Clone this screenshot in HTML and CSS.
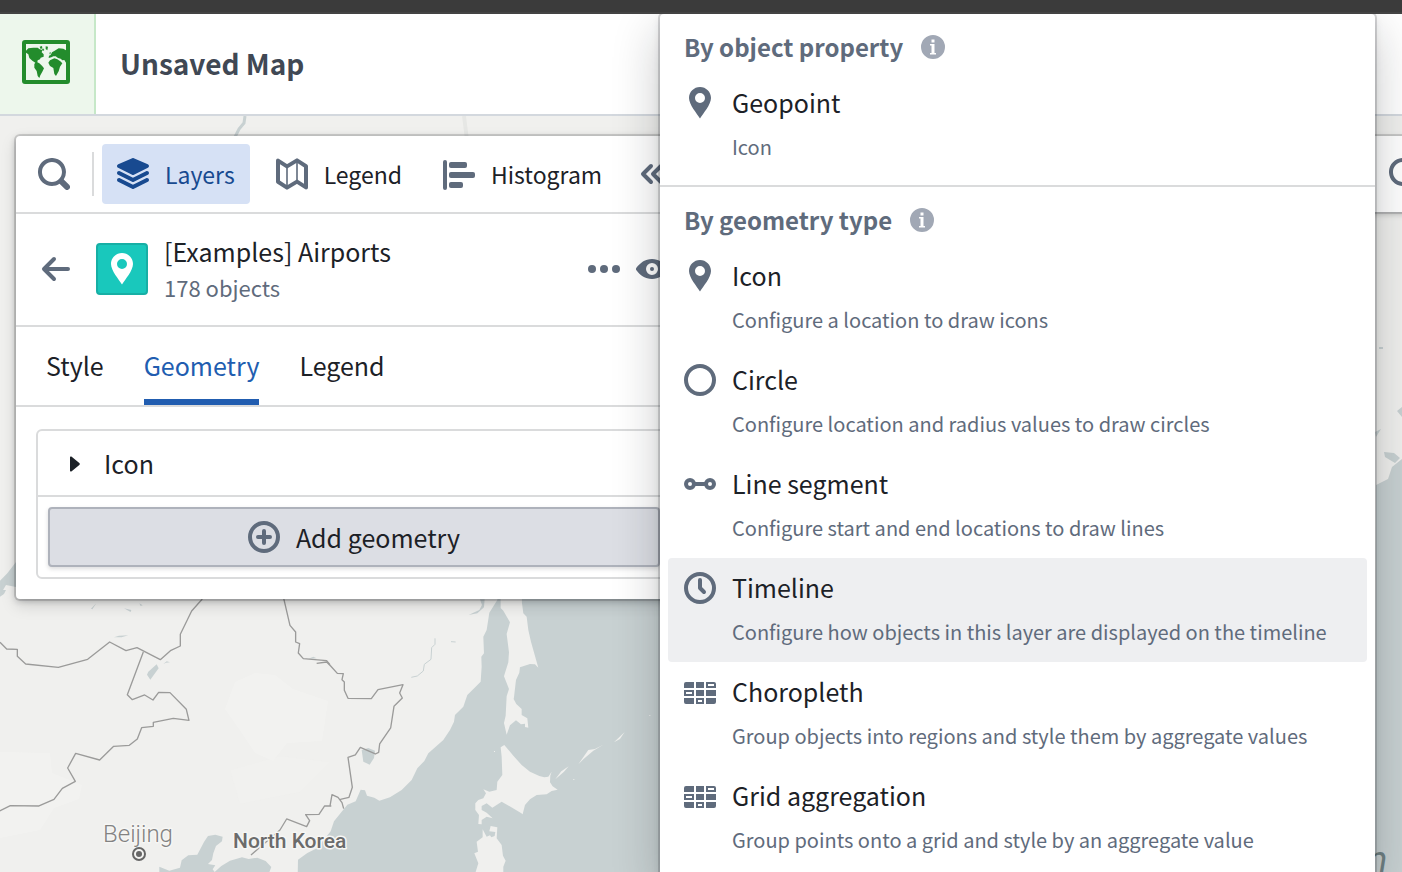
FILE: index.html
```html
<!DOCTYPE html>
<html lang="en">
<head>
<meta charset="utf-8">
<meta name="viewport" content="width=device-width, initial-scale=1">
<title>Unsaved Map</title>
<link rel="stylesheet" href="styles.css">
</head>
<body>
<svg class="sprite" aria-hidden="true">
  <symbol id="pin" viewBox="0 0 16 16"><path fill-rule="evenodd" d="M8 0C4.96 0 2.5 2.46 2.5 5.5c0 3.4 4 7.7 5.5 10.3 1.5-2.6 5.5-6.9 5.5-10.3C13.5 2.46 11.04 0 8 0zm0 8a2.5 2.5 0 110-5 2.5 2.5 0 010 5z"/></symbol>
  <symbol id="search" viewBox="0 0 16 16"><path d="M15.55 13.43l-2.67-2.68a6.94 6.94 0 001.11-3.76c0-3.87-3.13-7-7-7s-7 3.13-7 7 3.13 7 7 7c1.39 0 2.68-.42 3.76-1.11l2.68 2.67a1.498 1.498 0 102.12-2.12zm-8.56-1.44c-2.76 0-5-2.24-5-5s2.24-5 5-5 5 2.24 5 5-2.24 5-5 5z"/></symbol>
  <symbol id="info" viewBox="0 0 16 16"><path fill-rule="evenodd" d="M8 0a8 8 0 100 16A8 8 0 008 0zM7 3h2v2H7V3zm3 10H6v-1h1V7H6V6h3v6h1v1z"/></symbol>
  <symbol id="regions" viewBox="0 -1 32 32"><path fill-rule="evenodd" d="M2 5h8v6H0V7a2 2 0 012-2zM12 5h8v6h-8zM22 5h8a2 2 0 012 2v4H22zM24 7v2h6V7zM0 13h10v6H0zM2 15v2h6v-2zM12 13h8v6h-8zM22 13h10v6H22zM0 21h10v6H2a2 2 0 01-2-2zM12 21h8v6h-8zM14 23v2h4v-2zM22 21h10v4a2 2 0 01-2 2h-8z"/></symbol>
</svg>

<div class="window-bar"></div>
<div class="app">
  <header class="header">
    <a class="logo" href="#" aria-label="Maps home">
      <svg viewBox="66 120 144 132" aria-hidden="true">
        <rect x="72" y="126" width="132" height="120" rx="3" fill="none" stroke="#238c2c" stroke-width="12"/>
        <g fill="#238c2c">
          <path d="M78 152L85 145 100 143 113 143 119 148 127 150 125 157 131 163 131 170 122 173 120 178 113 181 112 187 118 190 126 197 132 205 127 215 121 226 118 234 113 228 110 213 103 203 103 192 106 188 97 182 88 174 85 163 78 158z"/>
          <path d="M119 140L126 138 127 145 122 147zM129 145L133 150 129 153 126 149zM137 139L144 140 142 151 137 147z"/>
          <path d="M150 181L163 175 172 178 181 184 187 190 180 200 176 214 168 228 163 222 160 204 150 198 145 188z"/>
          <path d="M146 174L147 167 152 165 156 157 164 152 176 145 190 146 198 151V188L193 180 187 181 182 176 174 174 167 169 160 169 154 172z"/>
          <path d="M148 158L153 157 150 164z"/>
        </g>
      </svg>
    </a>
    <h1 class="title">Unsaved Map</h1>
  </header>

  <main class="workspace">
    <svg class="map" viewBox="0 116 1402 756" preserveAspectRatio="xMinYMin slice" role="img" aria-label="Map of northeast Asia">
      <rect class="land" y="116" width="1402" height="756"/>
      <g fill="#f4f4f2" opacity=".7">
        <path d="M0 752l50 1 2 20 30 12-3 14-25 9-14 22-40 8zM235 682l20-9 20 2 18 14 35 12-6 40-35 2-14 18-18-8-16-24-14-20z"/>
        <path d="M230 770l50-14 50 6-30 30-60 12z" opacity=".5"/>
      </g>
      <path d="M464 116l3 24" stroke="#e6e7e5" stroke-width="4"/>
      <path class="river" d="M245 116l-1 7-5 6-4 8"/>
      <g transform="translate(330 590) scale(.3333)">
        <path class="water" d="M505 0l-3 30-24 38-8 52-10 20 2 50-8 10 1 30-3 45-40 40-12 35-25 25-3 20-12 25-20 30-45 40-12 23-21 22-17 35-30 30-35 22-32 10-15-9-22-6-6-16-13-2-15 35-25 10-20 25-20 25-10 30-40 50-30 15-28 20-2 100h1140V0z"/>
        <path class="land" d="M575 0l1 40 4 30 10 10 5 40 8 35 22 78-10-10-15-1-30 10-2 16-10 22-6 52-1 5 8 15 16 15v18l17 10 3 28-10-2v-10l-12 2-15-12-18 15-10 28-8-35 5-22 3-58 7-22-15-38 13-42 2-30-7-55 10-35-20-35-8-8V0z"/>
        <path class="land" d="M523 465l27 32 25 28 25 20 28 13 15 4 12-2 10-15-4 12-1 20 8 12 15 10-18 4-15 10-30 2-20 13-15 17-7 28-5-4-58-34-28 18-17-13-15 8v12l15 8 18 17-18-5-15 10v13l-10-1 2-27-11-15v-20l9-10 15-5 8-15-8-12 18 7 22-5 2-25 15-20-2-55-3-28z"/>
        <path class="land" d="M458 718l12 22 10-4 4 6 10-4 2-12-18-2 4-16 20 4-2 33 15 20 4 32 8 15-7 18v16h-83l8-26-12-30 11-5-4-30 18-13z"/>
        <path class="land" d="M676 568l18-24 22-15-14 16zM745 523l30-43 20-3 25-13-30 18-30 26zM852 457l32-31-14 21zM958 375h3v3h-3zM730 567h3v3h-3zM492 483h3v3h-3z"/>
        <path class="water" d="M95 480l20-6 20 8-3 22-13 20-19-9zM450 28h14l-2 24-20 18-26 5 14-7 18-8 8-15z"/>
        <path class="river" stroke-width="5" d="M315 145v18l-10 10-2 35-20 15-3 20-18 15-18 4M363 155l14 1"/>
        <path class="border" d="M-40 220l30-4 12 12 20 22 18 1-4 18 7 7v25l11 24 70 1 20-27 75-15-10 25 8 15-25 25-10 65-33 48-3 25-10 5-45-20-15 23-22 7 13 90-10 30-26 6M0 648l6-34 18 8 12 16 5 18"/>
      </g>
      <g transform="translate(0 590) scale(.3333)">
        <path class="water" d="M0 0h18l-6 12-12 8zM0-28l22-22 26-34v75L18-15 0 16zM445 245l25-22 6 12-25 34-10-15zM342 142l15-5 28-1-20 6zM372 55l22 5-2 6zM273 56l16-16-12 18zM418 40l10 6-6 2zM490 222l10-8 10 3-12 1zM925 206l15-6 10 5zM478 830l30 12 32-9 5-22 20-15 27-2 20-38 12-18 22-4 22 6-2 14-18 14-8 22-4 20-12 12 22 4-8 12 6 8 20-18 26-16 36-10 20 5 26-4 25 10 17 18-6 16H478z"/>
        <path class="border" d="M0 157l20 20 32 1v21l25 23 98 10 88-24 66-52 49 26 33-9 70 36 32-28 28-13v-35l34-70 32-36M430 186l-48 128 15 15 37-14 25 15 17-23 34 1 49 50 8 33-47-6-60 12v12l-35 4-13 34-24 19-47 3-42 41-72-20-24 44 23 40-39 21-25 33-45 20-86-1-32 16M850 20l20 86 17 20v30l12 5-4 28 15 17 70 6 10 12M753 795l87-75 20-33 60 23 9-18-12-18 40-1 17-25h20"/>
      </g>
      <path class="water" d="M1376 488V485l12-6 4-12 10-8v413h-27zM1384 452l10 1 6 5-5 5-10-6zM1375 432l6-3-5 8zM1397 411l5-4v10zM1379 347h4v2h-4z"/>
      <g class="map-labels">
        <text class="city" x="103" y="842">Beijing</text>
        <circle cx="139" cy="854" r="6" fill="#f4f4f2" stroke="#666" stroke-width="2"/>
        <circle cx="139" cy="854" r="3" fill="#666"/>
        <text class="country" x="233" y="848">North Korea</text>
        <text class="ocean" x="1368" y="872">n</text>
      </g>
    </svg>

    <section class="panel" aria-label="Layers">
      <div class="toolbar">
        <button class="icon-button" aria-label="Search"><svg class="icon"><use href="#search"/></svg></button>
        <span class="toolbar-divider"></span>
        <button class="tool tool-active">
          <svg class="icon" viewBox="0 0 16 16" aria-hidden="true"><path d="M.55 4.89l7 3.5c.14.07.29.11.45.11s.31-.04.45-.11l7-3.5a.998.998 0 00-.06-1.81L8.4.08a1.006 1.006 0 00-.79 0l-6.99 3a.992.992 0 00-.07 1.81zM15 10c-.16 0-.31.04-.45.11L8 13.38 1.45 10.1c-.14-.06-.29-.1-.45-.1-.55 0-1 .45-1 1 0 .39.23.73.55.89l7 3.5c.14.07.29.11.45.11s.31-.04.45-.11l7-3.5c.32-.16.55-.5.55-.89 0-.55-.45-1-1-1zm0-3.5c-.16 0-.31.04-.45.11L8 9.88 1.45 6.61A.997.997 0 001 6.5c-.55 0-1 .45-1 1 0 .39.23.73.55.89l7 3.5c.14.07.29.11.45.11s.31-.04.45-.11l7-3.5c.32-.16.55-.5.55-.89 0-.55-.45-1-1-1z"/></svg>
          Layers
        </button>
        <button class="tool">
          <svg class="icon line-icon" viewBox="0 0 16 16" aria-hidden="true"><path d="M1 1.3l4.5 2.9 5-3L15 4.1v10.6l-4.5-2.9-5 3L1 11.9z"/><path stroke-width=".8" d="M5.5 4v10.500M10.500 1.500V12"/></svg>
          Legend
        </button>
        <button class="tool">
          <svg class="icon" viewBox="0 0 16 16" aria-hidden="true"><rect y="1" width="2" height="15" rx="1"/><rect x="3" y="2" width="9" height="3" rx="1"/><rect x="3" y="7" width="13" height="3" rx="1"/><rect x="3" y="12" width="7" height="3" rx="1"/></svg>
          Histogram
        </button>
        <button class="icon-button collapse" aria-label="Collapse panel"><svg class="icon line-icon" viewBox="0 0 16 16" aria-hidden="true"><path d="M7 4L3 8l4 4M12 4L8 8l4 4"/></svg></button>
      </div>

      <div class="layer-header">
        <button class="icon-button" aria-label="Back"><svg class="icon line-icon" viewBox="0 0 16 16" aria-hidden="true"><path d="M14 8H2.400M7 3L2 8l5 5"/></svg></button>
        <span class="layer-tile"><svg class="icon"><use href="#pin"/></svg></span>
        <div class="layer-text">
          <h2 class="layer-name">[Examples] Airports</h2>
          <p class="layer-count">178 objects</p>
        </div>
        <button class="icon-button" aria-label="More"><svg class="icon" viewBox="0 0 16 16" aria-hidden="true"><circle cx="2" cy="8" r="2"/><circle cx="8" cy="8" r="2"/><circle cx="14" cy="8" r="2"/></svg></button>
        <button class="icon-button" aria-label="Toggle visibility"><svg class="icon" viewBox="0 0 16 16" aria-hidden="true"><path fill-rule="evenodd" d="M8 3C4.600 3 2 5 .2 7.400a1 1 0 000 1.200C2 11 4.600 13 8 13s6-2 7.800-4.400a1 1 0 000-1.200C14 5 11.400 3 8 3zm0 8a3 3 0 110-6 3 3 0 010 6z"/><circle cx="8" cy="8" r="1"/></svg></button>
      </div>

      <nav class="tabs" aria-label="Layer settings">
        <a class="tab" href="#style">Style</a>
        <a class="tab tab-active" href="#geometry" aria-current="page">Geometry</a>
        <a class="tab" href="#legend">Legend</a>
      </nav>

      <div class="panel-body">
        <div class="geometry-card">
          <button class="geometry-row">
            <svg class="caret" viewBox="0 0 10 18" aria-hidden="true"><path d="M0 3.500C0 2.300 1 2.200 1.700 2.800l7.600 6.200c.7.600.7 1.400 0 2L1.700 17.200C1 17.800 0 17.700 0 16.500z"/></svg>
            Icon
          </button>
          <div class="geometry-add">
            <button class="add-button">
              <svg class="icon line-icon" viewBox="0 0 16 16" aria-hidden="true"><circle cx="8" cy="8" r="7"/><path d="M8 5v6M5 8h6"/></svg>
              Add geometry
            </button>
          </div>
        </div>
      </div>
    </section>

    <div class="map-tools">
      <button class="icon-button" aria-label="Search map"><svg class="icon"><use href="#search"/></svg></button>
    </div>
  </main>

  <div class="menu" role="menu" aria-label="Add geometry">
    <section class="menu-section">
      <h3 class="menu-heading">By object property <svg class="info"><use href="#info"/></svg></h3>
      <button class="menu-item" role="menuitem">
        <svg class="icon"><use href="#pin"/></svg>
        <span class="item-title">Geopoint</span>
        <span class="item-note">Icon</span>
      </button>
    </section>
    <section class="menu-section">
      <h3 class="menu-heading">By geometry type <svg class="info"><use href="#info"/></svg></h3>
      <button class="menu-item" role="menuitem">
        <svg class="icon"><use href="#pin"/></svg>
        <span class="item-title">Icon</span>
        <span class="item-note">Configure a location to draw icons</span>
      </button>
      <button class="menu-item" role="menuitem">
        <svg class="icon line-icon" viewBox="0 0 16 16" aria-hidden="true"><circle cx="8" cy="8" r="7"/></svg>
        <span class="item-title">Circle</span>
        <span class="item-note">Configure location and radius values to draw circles</span>
      </button>
      <button class="menu-item" role="menuitem">
        <svg class="icon line-icon" viewBox="0 0 16 16" aria-hidden="true"><circle cx="3" cy="8" r="2"/><circle cx="13" cy="8" r="2"/><path d="M5.500 8h5"/></svg>
        <span class="item-title">Line segment</span>
        <span class="item-note">Configure start and end locations to draw lines</span>
      </button>
      <button class="menu-item menu-item-active" role="menuitem">
        <svg class="icon line-icon" viewBox="0 0 16 16" aria-hidden="true"><circle cx="8" cy="8" r="7"/><path d="M8 4v4l2 2"/></svg>
        <span class="item-title">Timeline</span>
        <span class="item-note">Configure how objects in this layer are displayed on the timeline</span>
      </button>
      <button class="menu-item" role="menuitem">
        <svg class="icon"><use href="#regions"/></svg>
        <span class="item-title">Choropleth</span>
        <span class="item-note">Group objects into regions and style them by aggregate values</span>
      </button>
      <button class="menu-item" role="menuitem">
        <svg class="icon"><use href="#regions"/></svg>
        <span class="item-title">Grid aggregation</span>
        <span class="item-note">Group points onto a grid and style by an aggregate value</span>
      </button>
    </section>
  </div>
</div>
</body>
</html>
```
FILE: styles.css
```css
:root {
  --text: #1c2127;
  --muted: #5f6b7c;
  --line: #dadbdc;
  --blue: #215db0;
}

* { box-sizing: border-box; }

body {
  margin: 0;
  height: 100vh;
  display: flex;
  flex-direction: column;
  overflow: hidden;
  background: #f0f0ee;
  color: var(--text);
  font: 25px/32px "Noto Sans CJK SC", "Noto Sans", sans-serif;
}

h1, h2, h3, p { margin: 0; font-size: inherit; font-weight: 400; }

button {
  margin: 0;
  padding: 0;
  border: 0;
  background: none;
  color: inherit;
  font: inherit;
  text-align: left;
  cursor: pointer;
}

a { color: inherit; text-decoration: none; }

.sprite { position: absolute; width: 0; height: 0; }

.icon {
  display: block;
  flex: none;
  width: 32px;
  height: 32px;
  fill: var(--muted);
}

.icon-button { display: block; flex: none; }

.line-icon {
  fill: none;
  stroke: var(--muted);
  stroke-width: 2;
  stroke-linecap: round;
  stroke-linejoin: round;
}

.window-bar {
  flex: none;
  height: 14px;
  background: #3b3b3b;
  border-bottom: 2px solid #434343;
}

.app {
  position: relative;
  flex: 1;
  min-height: 0;
  display: flex;
  flex-direction: column;
  overflow: hidden;
}

.header {
  flex: none;
  display: flex;
  align-items: stretch;
  height: 102px;
  background: #fff;
  border-bottom: 2px solid #d3d8de;
}

.logo {
  display: flex;
  align-items: center;
  width: 96px;
  padding: 0 24px 4px 22px;
  background: #edf7ec;
  border-right: 2px solid #c6e8c8;
}

.logo svg { width: 48px; height: 44px; }

.title {
  align-self: center;
  padding: 0 0 2px 24px;
  color: #404854;
  font-size: 28px;
  font-weight: 700;
}

.workspace { position: relative; flex: 1; min-height: 0; overflow: hidden; }

.map { position: absolute; inset: 0; width: 100%; height: 100%; }
.land { fill: #f0f0ee; }
.water { fill: #c8d1d2; }
.river { fill: none; stroke: #c8d1d2; stroke-width: 3; }
.border { fill: none; stroke: #9b9b9a; stroke-width: 4; stroke-linejoin: round; }
.map-labels { font-family: Roboto, sans-serif; }
.map-labels text { paint-order: stroke; stroke: #f6f6f4; stroke-width: 3px; stroke-linejoin: round; }
.map-labels .city { font-size: 24px; fill: #828282; font-weight: 300; }
.map-labels .country { font-size: 21px; fill: #6b6b6b; font-weight: 500; }
.map-labels .ocean { font-size: 36px; font-style: italic; fill: #6f8183; stroke: none; }

.panel {
  position: relative;
  width: 676px;
  margin: 20px 16px;
  background: #fff;
  border-radius: 4px;
  box-shadow: 0 0 0 2px rgba(17, 20, 24, .15), 0 2px 6px rgba(17, 20, 24, .25), 0 6px 16px rgba(17, 20, 24, .15);
}

.toolbar {
  display: flex;
  align-items: center;
  gap: 11px;
  height: 78px;
  padding-left: 22px;
  border-bottom: 2px solid var(--line);
}

.toolbar-divider {
  width: 2px;
  height: 44px;
  margin-left: 11px;
  margin-right: -3px;
  background: var(--line);
}

.tool {
  display: flex;
  align-items: center;
  gap: 16px;
  height: 60px;
  padding: 0 15px;
  border-radius: 4px;
  font-size: 23px;
}

.tool-active { background: #d6e1f5; color: #184a90; }
.tool-active .icon { fill: #184a90; }
.collapse { margin-left: 9px; }

.layer-header {
  display: flex;
  align-items: center;
  gap: 16px;
  height: 113px;
  padding: 0 24px 2px;
  border-bottom: 2px solid var(--line);
}

.layer-tile {
  display: grid;
  place-items: center;
  width: 52px;
  height: 52px;
  margin-left: 8px;
  background: #19c8bc;
  border: 2px solid #17afa5;
  border-radius: 4px;
}

.layer-tile .icon { fill: #fff; }
.layer-text { flex: 1; padding-bottom: 4px; }
.layer-name { line-height: 40px; }
.layer-count { color: var(--muted); font-size: 22px; }

.tabs {
  display: flex;
  gap: 40px;
  height: 80px;
  padding: 0 30px;
  border-bottom: 2px solid var(--line);
}

.tab { display: flex; align-items: center; padding-top: 4px; border-bottom: 6px solid transparent; }
.tab-active { color: var(--blue); border-bottom-color: var(--blue); }

.panel-body { padding: 22px 20px 20px; }
.geometry-card { border: 2px solid var(--line); border-radius: 6px; }

.geometry-row {
  display: flex;
  align-items: center;
  gap: 24px;
  width: 100%;
  height: 66px;
  padding: 0 32px;
  border-bottom: 2px solid var(--line);
}

.caret { width: 10px; height: 18px; fill: var(--text); }
.geometry-add { padding: 10px; }

.add-button {
  display: flex;
  align-items: center;
  justify-content: center;
  gap: 16px;
  width: 100%;
  height: 60px;
  background: #dcdee4;
  border: 2px solid #aeb2bb;
  border-radius: 4px;
  box-shadow: 0 2px 4px rgba(17, 20, 24, .15);
}

.map-tools {
  position: absolute;
  top: 20px;
  right: -41px;
  width: 76px;
  padding: 22px;
  background: #fff;
  box-shadow: 0 0 0 2px rgba(17, 20, 24, .15), 0 2px 6px rgba(17, 20, 24, .25);
}

.menu {
  position: absolute;
  top: 0;
  left: 660px;
  right: 27px;
  background: #fff;
  border-radius: 4px;
  box-shadow: 0 0 0 2px rgba(17, 20, 24, .16), 0 4px 8px rgba(17, 20, 24, .12), 0 16px 48px rgba(17, 20, 24, .24);
}

.menu-section { padding: 0 8px 8px; }
.menu-section + .menu-section { border-top: 2px solid var(--line); }

.menu-heading {
  display: flex;
  align-items: center;
  gap: 18px;
  height: 59px;
  padding: 6px 16px 0;
  color: var(--muted);
  font-size: 24px;
  font-weight: 700;
}

.info { width: 24px; height: 24px; fill: #a1a8b5; }

.menu-item {
  display: grid;
  grid-template-columns: 32px 1fr;
  column-gap: 16px;
  row-gap: 12px;
  width: 100%;
  height: 104px;
  padding: 14px 16px;
  border-radius: 4px;
}

.menu-item-active { background: #eeeff1; }
.item-title { line-height: 30px; }
.item-note { grid-column: 2; color: var(--muted); font-size: 20px; white-space: nowrap; }
```
